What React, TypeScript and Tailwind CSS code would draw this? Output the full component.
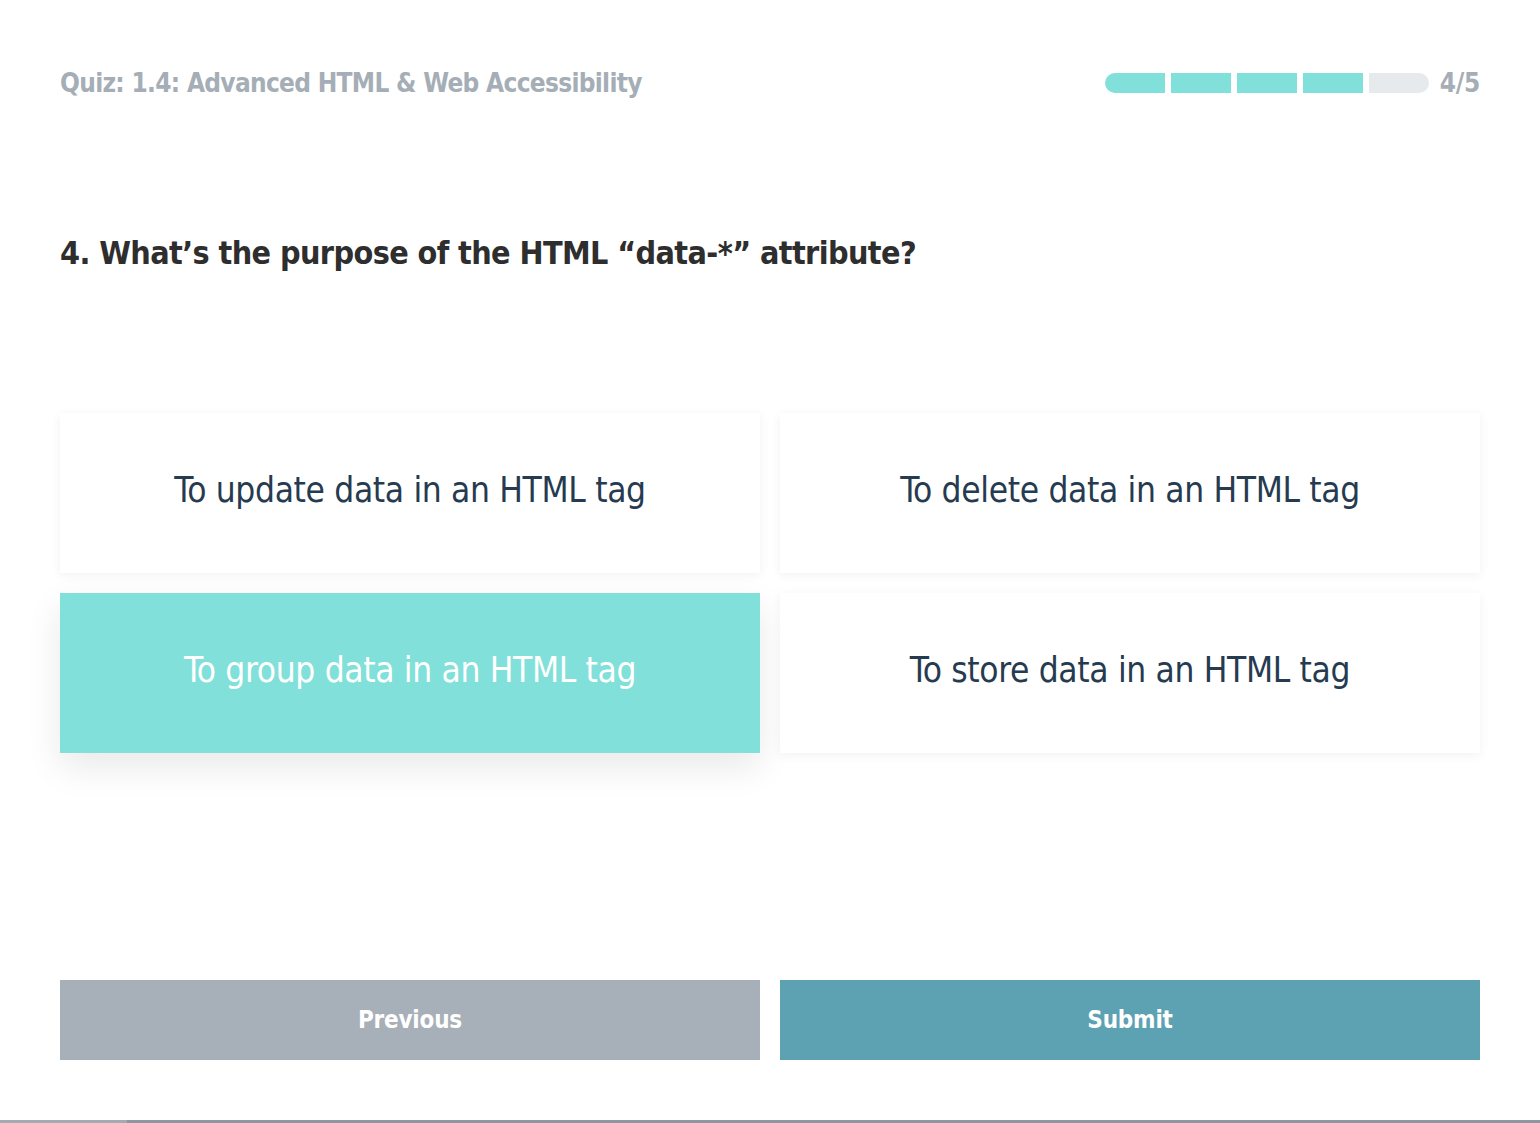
import { useState } from 'react';

const options = [
    'To update data in an HTML tag',
    'To delete data in an HTML tag',
    'To group data in an HTML tag',
    'To store data in an HTML tag',
];

const narrow = { fontFamily: "'DejaVu Sans Condensed', 'Liberation Sans Narrow', 'Liberation Sans', sans-serif" };

export default function App() {
    const [selected, setSelected] = useState(2);
    const step = 4;
    const total = 5;

    return (
        <div className="flex min-h-screen flex-col bg-white" style={narrow}>
            <div className="px-[60px]">
                <header className="mt-[63px] flex h-[40px] items-center justify-between">
                    <h1 className="text-[26px] font-bold tracking-[-0.7px] text-[#a5aeb6]">
                        Quiz: 1.4: Advanced HTML &amp; Web Accessibility
                    </h1>
                    <div className="flex items-center gap-[11px]">
                        <div className="flex h-[20px] gap-[6px] overflow-hidden rounded-full">
                            {Array.from({ length: total }).map((_, i) => (
                                <div
                                    key={i}
                                    className={`h-full w-[60px] ${i < step ? 'bg-[#82e0da]' : 'bg-[#e6eaed]'}`}
                                />
                            ))}
                        </div>
                        <span className="text-[26px] font-bold tracking-[-0.3px] text-[#a5aeb6]">
                            {step}/{total}
                        </span>
                    </div>
                </header>

                <h2 className="mt-[130px] h-[40px] text-[32px] leading-[40px] font-bold tracking-[-0.6px] text-[#2e2e2e]">
                    4. What’s the purpose of the HTML “data-*” attribute?
                </h2>

                <div className="mt-[140px] grid grid-cols-2 gap-[20px]">
                    {options.map((opt, i) => (
                        <button
                            key={opt}
                            onClick={() => setSelected(i)}
                            className={`flex h-[160px] items-center justify-center pb-[6px] text-[35px] font-normal tracking-[-0.35px] ${
                                selected === i
                                    ? 'bg-[#82e0da] text-white shadow-[0_14px_34px_rgba(0,0,0,0.09)]'
                                    : 'bg-white text-[#263b50] shadow-[0_2px_10px_rgba(0,0,0,0.06)]'
                            }`}
                        >
                            {opt}
                        </button>
                    ))}
                </div>

                <div className="mt-[227px] grid grid-cols-2 gap-[20px]">
                    <button className="h-[80px] bg-[#a7b0b8] text-[24px] font-bold tracking-[-0.2px] text-white">
                        Previous
                    </button>
                    <button className="h-[80px] bg-[#5ca2b2] text-[24px] font-bold tracking-[-0.2px] text-white">
                        Submit
                    </button>
                </div>
            </div>

            <div className="mt-[60px] flex h-[3px]">
                <div className="h-full w-[127px] bg-[#a3abb1]" />
                <div className="h-full flex-1 bg-[#8d979f]" />
            </div>
        </div>
    );
}
